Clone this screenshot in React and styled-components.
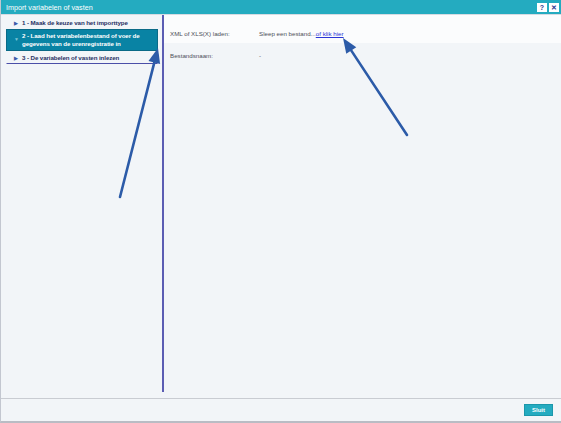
import React from "react";
import styled, { createGlobalStyle } from "styled-components";

const Global = createGlobalStyle`
  html, body { margin: 0; padding: 0; height: 100%; }
  #root { height: 100%; }
  body { font-family: "Liberation Sans", Arial, sans-serif; }
`;

const Window = styled.div`
  position: relative;
  width: 561px;
  height: 423px;
  box-sizing: border-box;
  display: flex;
  flex-direction: column;
  background: #f2f5f8;
  border-left: 1px solid #c3c7d0;
  border-bottom: 2px solid #b9bcc4;
  overflow: hidden;
`;

const TitleBar = styled.div`
  height: 14px;
  flex: none;
  display: flex;
  align-items: center;
  padding: 0 2px 0 5px;
  background: #24abc0;
  border-bottom: 1px solid #d6dbe2;
`;

const Title = styled.div`
  flex: 1;
  color: #ffffff;
  font-size: 7.2px;
`;

const TitleButton = styled.div`
  width: 10px;
  height: 9px;
  margin-left: 2px;
  background: #ffffff;
  color: #2b3a8f;
  font-size: 7px;
  font-weight: bold;
  display: flex;
  align-items: center;
  justify-content: center;
  line-height: 1;
`;

const Body = styled.div`
  flex: 1;
  display: flex;
  padding-bottom: 6px;
  border-bottom: 1px solid #c9ccd2;
`;

const Sidebar = styled.div`
  width: 163px;
  flex: none;
  box-sizing: border-box;
  padding: 1px 4px 0 5px;
  border-right: 2px solid #5b5db3;
`;

const Step = styled.div`
  display: flex;
  align-items: flex-start;
  gap: 4px;
  padding: 2px 4px ${(p) => (p.$active ? "2px" : "1px")} 7px;
  background: ${(p) => (p.$active ? "#0983a4" : "transparent")};
  border: 1px solid ${(p) => (p.$active ? "#0a6a87" : "transparent")};
  border-bottom: ${(p) => (p.$last ? "1px solid #4b4fa8" : undefined)};
  color: ${(p) => (p.$active ? "#ffffff" : "#273063")};
  font-size: 6.2px;
  font-weight: bold;
  letter-spacing: -0.1px;
  line-height: 8px;
`;

const Bullet = styled.span`
  flex: none;
  width: 4px;
  font-size: 5px;
  color: ${(p) => (p.$active ? "#7cc3d6" : "#3a5aa8")};
  margin-top: ${(p) => (p.$active ? "3px" : "0")};
`;

const Content = styled.div`
  flex: 1;
  display: flex;
  flex-direction: column;
`;

const Row = styled.div`
  display: flex;
  align-items: flex-start;
  box-sizing: border-box;
  height: ${(p) => p.$h}px;
  padding: ${(p) => p.$top}px 0 0 6px;
  background: ${(p) => p.$bg || "transparent"};
  font-size: 6.2px;
  line-height: 7px;
  color: #4d4f58;
`;

const Label = styled.div`
  width: 89px;
  flex: none;
`;

const Link = styled.a`
  color: #2a35d6;
  text-decoration: underline;
`;

const Footer = styled.div`
  height: 22px;
  flex: none;
  display: flex;
  align-items: center;
  justify-content: flex-end;
  padding-right: 8px;
`;

const CloseButton = styled.div`
  width: 29px;
  height: 12px;
  background: #24abc0;
  color: #ffffff;
  font-size: 6px;
  font-weight: bold;
  display: flex;
  align-items: center;
  justify-content: center;
  border: 1px solid #1b97ab;
  box-sizing: border-box;
`;

const Annotations = styled.svg`
  position: absolute;
  left: 0;
  top: 0;
  pointer-events: none;
`;

function Arrow({ x1, y1, x2, y2 }) {
  const dx = x2 - x1;
  const dy = y2 - y1;
  const len = Math.hypot(dx, dy);
  const ux = dx / len;
  const uy = dy / len;
  const hl = 15;
  const hw = 6;
  const bx = x2 - ux * hl;
  const by = y2 - uy * hl;
  const px = -uy;
  const py = ux;
  return (
    <g>
      <line x1={x1} y1={y1} x2={bx + ux * 2} y2={by + uy * 2} stroke="#2c5ba8" strokeWidth="2.6" strokeLinecap="round" />
      <polygon
        points={`${x2},${y2} ${bx + px * hw},${by + py * hw} ${bx - px * hw},${by - py * hw}`}
        fill="#2c5ba8"
      />
    </g>
  );
}

export default function App() {
  return (
    <>
      <Global />
      <Window>
        <TitleBar>
          <Title>Import variabelen of vasten</Title>
          <TitleButton>?</TitleButton>
          <TitleButton>✕</TitleButton>
        </TitleBar>
        <Body>
          <Sidebar>
            <Step>
              <Bullet>▶</Bullet>
              <span>1 - Maak de keuze van het importtype</span>
            </Step>
            <Step $active>
              <Bullet $active>▼</Bullet>
              <span>2 - Laad het variabelenbestand of voer de gegevens van de urenregistratie in</span>
            </Step>
            <Step $last>
              <Bullet>▶</Bullet>
              <span>3 - De variabelen of vasten inlezen</span>
            </Step>
          </Sidebar>
          <Content>
            <Row $h={28} $top={15} $bg="#fbfcfd">
              <Label>XML of XLS(X) laden:</Label>
              <span>
                Sleep een bestand...<Link href="#">of klik hier</Link>
              </span>
            </Row>
            <Row $h={20} $top={9}>
              <Label>Bestandsnaam:</Label>
              <span>-</span>
            </Row>
          </Content>
        </Body>
        <Footer>
          <CloseButton>Sluit</CloseButton>
        </Footer>
        <Annotations width="561" height="423" viewBox="0 0 561 423">
          <Arrow x1={119} y1={197} x2={157} y2={48} />
          <Arrow x1={406} y1={135} x2={342} y2={38} />
        </Annotations>
      </Window>
    </>
  );
}
